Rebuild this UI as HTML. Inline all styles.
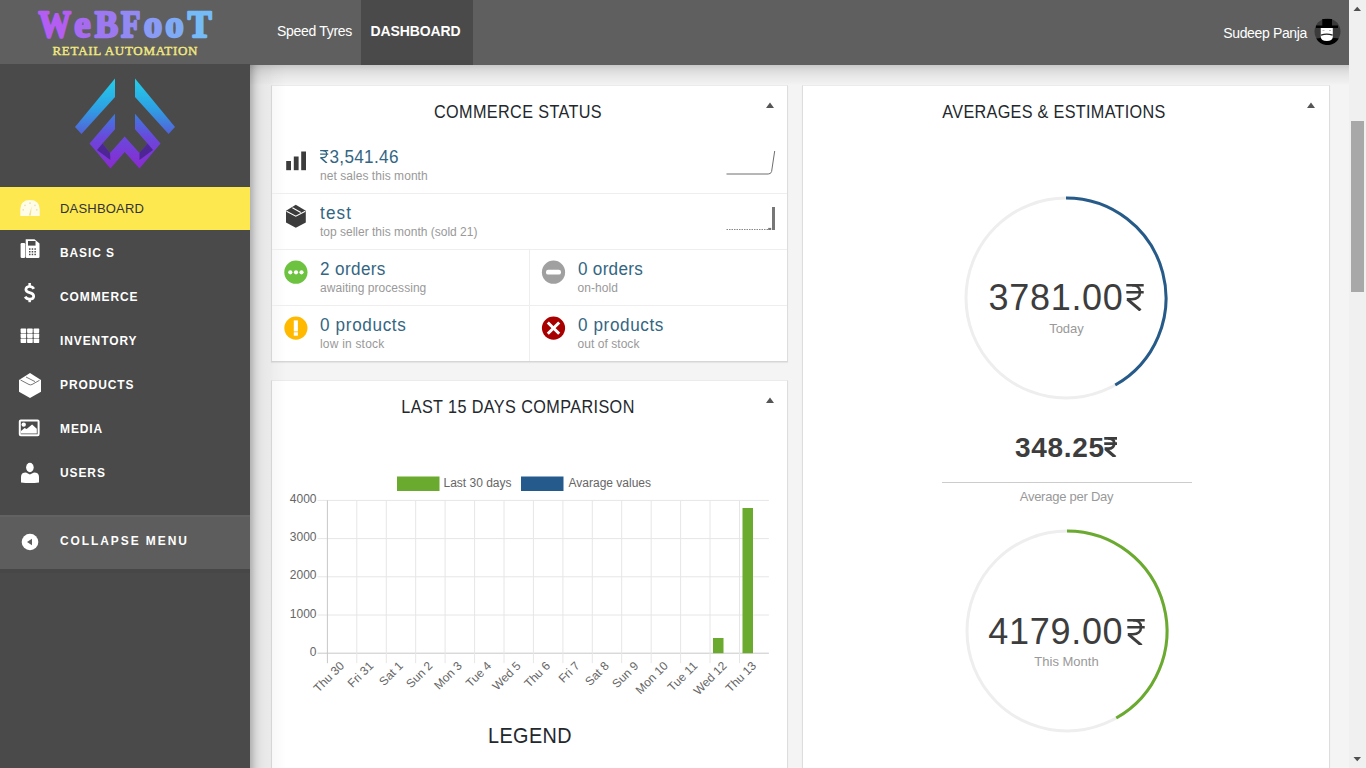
<!DOCTYPE html>
<html><head><meta charset="utf-8"><title>Dashboard</title>
<style>
html,body{margin:0;padding:0;width:1366px;height:768px;overflow:hidden;background:#f3f3f3;}
body{position:relative;font-family:"Liberation Sans", sans-serif;}
.t{position:absolute;line-height:1;white-space:nowrap;}
.abs{position:absolute;}
svg.rs{display:inline-block;vertical-align:baseline;}
</style></head><body>
<div class="abs" style="left:250px;top:64px;width:1099px;height:704px;background:#f4f4f4;"></div>
<div class="abs" style="left:271px;top:85px;width:517px;height:277px;background:#fff;border:1px solid #dddddd;border-top-color:#ebebeb;border-bottom-color:#d6d6d6;box-shadow:0 1px 1px rgba(0,0,0,.06);box-sizing:border-box;"></div>
<div class="abs" style="left:271px;top:380px;width:517px;height:401px;background:#fff;border:1px solid #dddddd;border-top-color:#ebebeb;border-bottom-color:#d6d6d6;box-shadow:0 1px 1px rgba(0,0,0,.06);box-sizing:border-box;"></div>
<div class="abs" style="left:802px;top:85px;width:528px;height:700px;background:#fff;border:1px solid #dddddd;border-top-color:#ebebeb;border-bottom-color:#d6d6d6;box-shadow:0 1px 1px rgba(0,0,0,.06);box-sizing:border-box;"></div>
<div class="abs" style="left:250px;top:65px;width:1099px;height:20px;background:linear-gradient(rgba(0,0,0,.18),rgba(0,0,0,.107) 25%,rgba(0,0,0,.06) 50%,rgba(0,0,0,.033) 75%,rgba(0,0,0,.01) 95%,rgba(0,0,0,0));"></div>
<div class="abs" style="left:250px;top:65px;width:36px;height:703px;background:linear-gradient(90deg,rgba(0,0,0,.26),rgba(0,0,0,.225) 5.5%,rgba(0,0,0,.17) 11%,rgba(0,0,0,.127) 16.6%,rgba(0,0,0,.094) 22%,rgba(0,0,0,.074) 27.7%,rgba(0,0,0,.057) 33%,rgba(0,0,0,.049) 44%,rgba(0,0,0,.04) 55%,rgba(0,0,0,.025) 66%,rgba(0,0,0,.014) 78%,rgba(0,0,0,0));"></div>
<div class="abs" style="left:0;top:0;width:1349px;height:65px;background:#5f5f5f;"></div>
<div class="abs" style="left:361px;top:0;width:112px;height:65px;background:#4a4a4a;"></div>
<div class="t" style="left:277px;top:24.15px;font-size:14px;color:#fff;font-weight:normal;letter-spacing:-0.3px;font-family:'Liberation Sans', sans-serif;">Speed Tyres</div>
<div class="t" style="left:370.5px;top:24.15px;font-size:14px;color:#fff;font-weight:bold;letter-spacing:-0.1px;font-family:'Liberation Sans', sans-serif;">DASHBOARD</div>
<div class="t" style="left:1107.00px;width:200px;text-align:right;top:26.15px;font-size:14px;color:#fff;font-weight:normal;letter-spacing:-0.35px;font-family:'Liberation Sans', sans-serif;">Sudeep Panja</div>
<svg class="abs" style="left:1314px;top:18px;" width="27" height="27" viewBox="0 0 27 27">
<circle cx="13.5" cy="13.5" r="13" fill="#3b3b3b"/>
<path d="M2.2 20.5 A13 13 0 0 0 24.8 20.5 Q20 19.6 13.5 19.8 Q7 19.6 2.2 20.5 Z" fill="#000"/>
<rect x="8.3" y="1" width="9.7" height="7" fill="#000"/>
<rect x="2" y="7.5" width="22" height="2.5" fill="#000"/>
<path d="M6.8 10 H18.8 V19 Q18.5 22.8 12.8 23 Q7.1 22.8 6.8 19 Z" fill="#fff"/>
<path d="M7 17.2 Q12.8 15.2 18.6 17.2" fill="none" stroke="#222" stroke-width="1.3"/>
<rect x="8.5" y="12" width="2" height="1" fill="#bbb"/><rect x="15" y="12" width="2" height="1" fill="#bbb"/>
</svg>
<svg class="abs" style="left:0;top:0;" width="250" height="64" viewBox="0 0 250 64">
<defs><linearGradient id="lg" x1="36" y1="0" x2="212" y2="0" gradientUnits="userSpaceOnUse">
<stop offset="0" stop-color="#b45cf2"/><stop offset="0.45" stop-color="#9a80f2"/><stop offset="1" stop-color="#72bdf8"/></linearGradient></defs>
<g font-family="Liberation Serif" font-weight="bold" font-size="37" stroke-width="2.3" stroke-linejoin="round" text-anchor="middle"><text transform="translate(54.7,36.8) scale(0.88,1)" x="0" y="0" fill="#b35df3" stroke="#b35df3">W</text><text transform="translate(82.4,36.8) scale(1,1)" x="0" y="0" fill="#a66bf1" stroke="#a66bf1">e</text><text transform="translate(106.5,36.8) scale(0.95,1)" x="0" y="0" fill="#9c79f1" stroke="#9c79f1">B</text><text transform="translate(130.8,36.8) scale(0.86,1)" x="0" y="0" fill="#9389f2" stroke="#9389f2">F</text><text transform="translate(153.1,36.8) scale(1,1)" x="0" y="0" fill="#899bf4" stroke="#899bf4">o</text><text transform="translate(174.6,36.8) scale(1,1)" x="0" y="0" fill="#7fabf6" stroke="#7fabf6">o</text><text transform="translate(199.7,36.8) scale(0.97,1)" x="0" y="0" fill="#74bbf8" stroke="#74bbf8">T</text></g>
<text x="125" y="55" text-anchor="middle" font-family="Liberation Serif" font-weight="normal" font-size="13" fill="#f3ea80" stroke="#f3ea80" stroke-width="0.4" textLength="145" lengthAdjust="spacing">RETAIL AUTOMATION</text>
</svg>
<div class="abs" style="left:0;top:64px;width:250px;height:704px;background:#4a4a4a;"></div>
<svg class="abs" style="left:70px;top:72px;" width="110" height="100" viewBox="70 72 110 100">
<defs>
<linearGradient id="g1" x1="0" y1="78" x2="0" y2="134" gradientUnits="userSpaceOnUse"><stop offset="0" stop-color="#22d0ea"/><stop offset="0.55" stop-color="#2ea0e4"/><stop offset="1" stop-color="#5560d8"/></linearGradient>
<linearGradient id="g2" x1="0" y1="113" x2="0" y2="168" gradientUnits="userSpaceOnUse"><stop offset="0" stop-color="#3a7ee0"/><stop offset="0.45" stop-color="#6a48dc"/><stop offset="1" stop-color="#8a2ad0"/></linearGradient>
</defs>
<polygon points="115,78.5 115,97 81.5,134 75,127" fill="url(#g1)"/>
<polygon points="135,78.5 135,97 168.5,134 175,127" fill="url(#g1)"/>
<polygon points="115,113.7 89.5,143.6 110.4,168.4 124.7,152 139.5,168.4 160.5,143.6 135,113.7 135,129.3 147.5,143.6 139.5,153 124.7,136.5 110,153 102.5,143.6 115,129.3" fill="url(#g2)"/>
<polygon points="102.5,143.6 110,153 110.4,160 97,150" fill="#3a1e78" opacity="0.7"/>
<polygon points="147.5,143.6 139.5,153 139.5,160 153,150" fill="#3a1e78" opacity="0.7"/>
</svg>
<div class="abs" style="left:0;top:187px;width:250px;height:43px;background:#fee84f;"></div>
<div class="t" style="left:60px;top:201.80px;font-size:13px;color:#333;font-weight:normal;letter-spacing:0.2px;font-family:'Liberation Sans', sans-serif;">DASHBOARD</div>
<div class="t" style="left:60px;top:245.80px;font-size:13px;color:#fff;font-weight:bold;letter-spacing:1.0px;font-family:'Liberation Sans', sans-serif;transform:scaleX(0.92);transform-origin:0 0;">BASIC S</div>
<div class="t" style="left:60px;top:289.80px;font-size:13px;color:#fff;font-weight:bold;letter-spacing:1.0px;font-family:'Liberation Sans', sans-serif;transform:scaleX(0.92);transform-origin:0 0;">COMMERCE</div>
<div class="t" style="left:60px;top:333.80px;font-size:13px;color:#fff;font-weight:bold;letter-spacing:1.0px;font-family:'Liberation Sans', sans-serif;transform:scaleX(0.92);transform-origin:0 0;">INVENTORY</div>
<div class="t" style="left:60px;top:377.80px;font-size:13px;color:#fff;font-weight:bold;letter-spacing:1.0px;font-family:'Liberation Sans', sans-serif;transform:scaleX(0.92);transform-origin:0 0;">PRODUCTS</div>
<div class="t" style="left:60px;top:421.80px;font-size:13px;color:#fff;font-weight:bold;letter-spacing:1.0px;font-family:'Liberation Sans', sans-serif;transform:scaleX(0.92);transform-origin:0 0;">MEDIA</div>
<div class="t" style="left:60px;top:465.80px;font-size:13px;color:#fff;font-weight:bold;letter-spacing:1.0px;font-family:'Liberation Sans', sans-serif;transform:scaleX(0.92);transform-origin:0 0;">USERS</div>
<svg class="abs" style="left:20px;top:200px;" width="20" height="16" viewBox="0 0 20 16">
<path d="M0.3 16 V9.5 Q0.3 0 10 0 Q19.7 0 19.7 9.5 V16 Z" fill="#fffce8"/>
<circle cx="10" cy="3.2" r="0.9" fill="#e9e2b5"/><circle cx="5" cy="5.3" r="0.9" fill="#e9e2b5"/><circle cx="15" cy="5.3" r="0.9" fill="#e9e2b5"/>
<circle cx="3.2" cy="9.8" r="0.9" fill="#e9e2b5"/><circle cx="16.8" cy="9.8" r="0.9" fill="#e9e2b5"/>
<path d="M11.6 6.5 L8.8 15.5 H10.9 Z" fill="#efe39a"/>
</svg>
<svg class="abs" style="left:20px;top:238px;" width="21" height="21" viewBox="0 0 21 21">
<rect x="0.6" y="5" width="4.6" height="15" rx="1.2" fill="#fff"/>
<path d="M5.7 1.2 H14.5 L19.5 5.5 V18.8 Q19.5 20 18.3 20 H6.9 Q5.7 20 5.7 18.8 Z" fill="#fff"/>
<rect x="8" y="3" width="7.5" height="4.6" fill="#4a4a4a"/>
<g fill="#4a4a4a"><rect x="9" y="10.3" width="1.5" height="1.5"/><rect x="11.7" y="10.3" width="1.5" height="1.5"/><rect x="14.4" y="10.3" width="1.5" height="1.5"/>
<rect x="9" y="13" width="1.5" height="1.5"/><rect x="11.7" y="13" width="1.5" height="1.5"/><rect x="14.4" y="13" width="1.5" height="1.5"/>
<rect x="9" y="15.7" width="1.5" height="1.5"/><rect x="11.7" y="15.7" width="1.5" height="1.5"/><rect x="14.4" y="15.7" width="1.5" height="1.5"/></g>
</svg>
<svg class="abs" style="left:24px;top:283px;" width="12" height="20" viewBox="0 0 12 20">
<rect x="4.4" y="0" width="2.5" height="3.6" fill="#fff"/><rect x="4.4" y="15.6" width="2.5" height="3.6" fill="#fff"/>
<path d="M9.8 5.8C9 4.2 7.6 3.5 5.6 3.5C3.2 3.5 1.9 4.8 1.9 6.5C1.9 8.5 3.7 9.1 5.6 9.6C8 10.2 9.7 11 9.7 13.2C9.7 15 8.1 16.1 5.6 16.1C3.4 16.1 2 15.3 1.2 13.6" fill="none" stroke="#fff" stroke-width="2.7"/>
</svg>
<svg class="abs" style="left:20px;top:328px;" width="21" height="16" viewBox="0 0 21 16"><g fill="#fff"><rect x="0.6" y="0.6" width="5.6" height="4.3" rx="0.6"/><rect x="7.1" y="0.6" width="5.6" height="4.3" rx="0.6"/><rect x="13.6" y="0.6" width="5.6" height="4.3" rx="0.6"/><rect x="0.6" y="5.6" width="5.6" height="4.3" rx="0.6"/><rect x="7.1" y="5.6" width="5.6" height="4.3" rx="0.6"/><rect x="13.6" y="5.6" width="5.6" height="4.3" rx="0.6"/><rect x="0.6" y="10.6" width="5.6" height="4.3" rx="0.6"/><rect x="7.1" y="10.6" width="5.6" height="4.3" rx="0.6"/><rect x="13.6" y="10.6" width="5.6" height="4.3" rx="0.6"/></g></svg>
<svg class="abs" style="left:18px;top:372px;" width="24" height="28" viewBox="18 372 24 28">
<polygon points="30,373 41,380 41,391.8 30,398 19,391.8 19,380" fill="#fff"/>
<path d="M20.5 380 L29 384.5 Q30.5 385.2 32 384.5 L39.5 380.3" fill="none" stroke="#666" stroke-width="0.9"/>
<path d="M26 377 L35 381.6" fill="none" stroke="#666" stroke-width="0.9"/>
</svg>
<svg class="abs" style="left:18px;top:418px;" width="23" height="20" viewBox="18 418 23 20">
<rect x="19.8" y="420.5" width="18.8" height="14.8" rx="1" fill="none" stroke="#fff" stroke-width="2"/>
<circle cx="23.7" cy="424.6" r="2.2" fill="#fff"/>
<path d="M21 433.6 V431 L24.6 428 L26.6 429 L32.1 424.4 L36.8 428.7 V433.6 Z" fill="#fff"/>
</svg>
<svg class="abs" style="left:20px;top:462px;" width="20" height="21" viewBox="20 462 20 21">
<ellipse cx="29.9" cy="467.5" rx="3.8" ry="4.7" fill="#fff"/>
<path d="M21 482.5 V477 Q21 472.6 26 472.6 L29.9 474.5 L34 472.6 Q39 472.6 39 477 V482.5 Q30 483.5 21 482.5 Z" fill="#fff"/>
</svg>
<div class="abs" style="left:0;top:515px;width:250px;height:54px;background:#5d5d5d;border-top:2px solid #626262;box-sizing:border-box;"></div>
<div class="abs" style="left:0;top:569px;width:250px;height:4px;background:#474747;"></div>
<svg class="abs" style="left:21px;top:533px;" width="18" height="18" viewBox="0 0 18 18"><circle cx="9" cy="9" r="8.3" fill="#fff"/><path d="M6 9 L11 5.8 V12.2 Z" fill="#5d5d5d"/></svg>
<div class="t" style="left:60px;top:533.80px;font-size:13px;color:#fff;font-weight:bold;letter-spacing:2.1px;font-family:'Liberation Sans', sans-serif;transform:scaleX(0.92);transform-origin:0 0;">COLLAPSE MENU</div>
<div class="abs" style="left:1349px;top:0;width:17px;height:768px;background:#f0f0f0;"></div>
<div class="abs" style="left:1351px;top:121px;width:13px;height:171px;background:#a8a8a8;"></div>
<svg class="abs" style="left:1349px;top:0;" width="17" height="17"><path d="M4.5 11 L12 11 L8.25 6.8 Z" fill="#505050"/></svg>
<svg class="abs" style="left:1349px;top:751px;" width="17" height="17"><path d="M4.5 6 L12 6 L8.25 10.2 Z" fill="#505050"/></svg>
<div class="t" style="left:217.50px;width:600px;text-align:center;top:102.56px;font-size:18px;color:#23282d;font-weight:normal;letter-spacing:0.42px;font-family:'Liberation Sans', sans-serif;transform:scaleX(0.9);transform-origin:50% 0;">COMMERCE STATUS</div>
<svg class="abs" style="left:765px;top:101px;" width="10" height="8"><path d="M1 7 L9 7 L5 1.5 Z" fill="#555"/></svg>
<div class="abs" style="left:272px;top:193px;width:515px;height:1px;background:#eeeeee;"></div>
<div class="abs" style="left:272px;top:249px;width:515px;height:1px;background:#eeeeee;"></div>
<div class="abs" style="left:272px;top:305px;width:515px;height:1px;background:#eeeeee;"></div>
<div class="abs" style="left:529px;top:249px;width:1px;height:112px;background:#eeeeee;"></div>
<div class="t" style="left:320px;top:148.06px;font-size:18px;color:#336683;letter-spacing:0.35px;transform:scaleX(0.95);transform-origin:0 0;"><svg class="rs" style="width:9.00px;height:13.19px;margin-left:0;margin-right:1px;" viewBox="0 0 18 26.4"><g fill="none" stroke="#336683" stroke-width="2.6"><path d="M0.3 1.3H17.7M0.3 8.3H17.7"/><path d="M6 1.3C11.5 1.3 14 4 14 8C14 12.5 11 15.3 6 15.3H0.8"/><path d="M1.5 15.3L14.5 26.4" stroke-width="2.99"/></g></svg>3,541.46</div>
<div class="t" style="left:320px;top:170.34px;font-size:12px;color:#999999;font-weight:normal;letter-spacing:0.05px;font-family:'Liberation Sans', sans-serif;">net sales this month</div>
<div class="t" style="left:320px;top:204.06px;font-size:18px;color:#336683;font-weight:normal;letter-spacing:1.2px;font-family:'Liberation Sans', sans-serif;transform:scaleX(0.95);transform-origin:0 0;">test</div>
<div class="t" style="left:320px;top:226.34px;font-size:12px;color:#999999;font-weight:normal;letter-spacing:0.0px;font-family:'Liberation Sans', sans-serif;">top seller this month (sold 21)</div>
<div class="t" style="left:320px;top:260.36px;font-size:18px;color:#336683;font-weight:normal;letter-spacing:0.4px;font-family:'Liberation Sans', sans-serif;transform:scaleX(0.95);transform-origin:0 0;">2 orders</div>
<div class="t" style="left:320px;top:282.34px;font-size:12px;color:#999999;font-weight:normal;letter-spacing:0.05px;font-family:'Liberation Sans', sans-serif;">awaiting processing</div>
<div class="t" style="left:577.5px;top:260.36px;font-size:18px;color:#336683;font-weight:normal;letter-spacing:0.3px;font-family:'Liberation Sans', sans-serif;transform:scaleX(0.95);transform-origin:0 0;">0 orders</div>
<div class="t" style="left:577.5px;top:282.34px;font-size:12px;color:#999999;font-weight:normal;letter-spacing:0.05px;font-family:'Liberation Sans', sans-serif;">on-hold</div>
<div class="t" style="left:320px;top:316.36px;font-size:18px;color:#336683;font-weight:normal;letter-spacing:0.7px;font-family:'Liberation Sans', sans-serif;transform:scaleX(0.95);transform-origin:0 0;">0 products</div>
<div class="t" style="left:320px;top:338.34px;font-size:12px;color:#999999;font-weight:normal;letter-spacing:0.2px;font-family:'Liberation Sans', sans-serif;">low in stock</div>
<div class="t" style="left:577.5px;top:316.36px;font-size:18px;color:#336683;font-weight:normal;letter-spacing:0.65px;font-family:'Liberation Sans', sans-serif;transform:scaleX(0.95);transform-origin:0 0;">0 products</div>
<div class="t" style="left:577.5px;top:338.34px;font-size:12px;color:#999999;font-weight:normal;letter-spacing:0.05px;font-family:'Liberation Sans', sans-serif;">out of stock</div>
<svg class="abs" style="left:284px;top:150px;" width="24" height="22" viewBox="284 150 24 22"><g fill="#3c3c3c">
<rect x="286.2" y="161" width="4.8" height="9.2"/><rect x="293.8" y="156.5" width="4.8" height="13.7"/><rect x="301.2" y="151.5" width="4.8" height="18.7"/></g></svg>
<svg class="abs" style="left:284px;top:203px;" width="24" height="26" viewBox="284 203 24 26">
<polygon points="295.8,204.8 305.8,210.8 305.8,222.5 295.8,227.7 286,222.5 286,210.8" fill="#3c3c3c"/>
<path d="M286.5 211.3 L295.8 216.2 L305.3 211.3" fill="none" stroke="#fff" stroke-width="1.1"/>
<path d="M292.4 207.8 L300.8 212.6" fill="none" stroke="#fff" stroke-width="1.1"/>
</svg>
<svg class="abs" style="left:284px;top:260px;" width="24" height="24" viewBox="0 0 24 24"><circle cx="11.9" cy="12.2" r="11.6" fill="#6dc240"/>
<circle cx="6.3" cy="12.3" r="2.1" fill="#fff"/><circle cx="12" cy="12.3" r="2.1" fill="#fff"/><circle cx="17.5" cy="12.3" r="2.1" fill="#fff"/></svg>
<svg class="abs" style="left:541px;top:260px;" width="25" height="24" viewBox="0 0 25 24"><circle cx="12.5" cy="12.2" r="11.6" fill="#a0a0a0"/>
<rect x="5" y="9.8" width="15" height="4.8" rx="2.2" fill="#fff"/></svg>
<svg class="abs" style="left:284px;top:316px;" width="24" height="24" viewBox="0 0 24 24"><circle cx="11.9" cy="12.1" r="11.6" fill="#ffb900"/>
<rect x="9.8" y="4.4" width="4.1" height="11" fill="#fff"/><rect x="9.8" y="16.3" width="4.1" height="3.4" fill="#fff"/></svg>
<svg class="abs" style="left:541px;top:316px;" width="25" height="24" viewBox="0 0 25 24"><circle cx="12.5" cy="12.1" r="11.6" fill="#a80000"/>
<path d="M6.8 6.5 L18.2 17.8 M18.2 6.5 L6.8 17.8" stroke="#fff" stroke-width="3"/></svg>
<svg class="abs" style="left:720px;top:145px;" width="60" height="90" viewBox="720 145 60 90">
<path d="M726.5 174 H768.2 Q771 174 771.6 171.5 L774.7 151" fill="none" stroke="#6e6e6e" stroke-width="1"/>
<path d="M726.5 229.5 H768" fill="none" stroke="#888" stroke-width="1" stroke-dasharray="1.5 1"/>
<rect x="768.2" y="227.9" width="3" height="2.1" fill="#777"/>
<rect x="772" y="207" width="3" height="23" fill="#777"/>
</svg>
<div class="t" style="left:217.50px;width:600px;text-align:center;top:397.76px;font-size:18px;color:#23282d;font-weight:normal;letter-spacing:0.45px;font-family:'Liberation Sans', sans-serif;transform:scaleX(0.9);transform-origin:50% 0;">LAST 15 DAYS COMPARISON</div>
<svg class="abs" style="left:765px;top:396px;" width="10" height="8"><path d="M1 7 L9 7 L5 1.5 Z" fill="#555"/></svg>
<svg class="abs" style="left:272px;top:430px;" width="515" height="290" viewBox="272 430 515 290">
<rect x="397" y="476.5" width="42.5" height="14.5" fill="#6aaa2f" />
<rect x="521" y="476.5" width="42.5" height="14.5" fill="#245a8c" />
<text x="443.5" y="487.3" font-family="Liberation Sans" font-size="12" fill="#666">Last 30 days</text>
<text x="568.5" y="487.3" font-family="Liberation Sans" font-size="12" fill="#666">Avarage values</text>
<line x1="317.5" y1="500.4" x2="768.9" y2="500.4" stroke="#e6e6e6" stroke-width="1"/>
<text x="316.5" y="502.9" text-anchor="end" font-family="Liberation Sans" font-size="12" fill="#666">4000</text>
<line x1="317.5" y1="538.6" x2="768.9" y2="538.6" stroke="#e6e6e6" stroke-width="1"/>
<text x="316.5" y="541.1" text-anchor="end" font-family="Liberation Sans" font-size="12" fill="#666">3000</text>
<line x1="317.5" y1="576.8" x2="768.9" y2="576.8" stroke="#e6e6e6" stroke-width="1"/>
<text x="316.5" y="579.3" text-anchor="end" font-family="Liberation Sans" font-size="12" fill="#666">2000</text>
<line x1="317.5" y1="615.0" x2="768.9" y2="615.0" stroke="#e6e6e6" stroke-width="1"/>
<text x="316.5" y="617.5" text-anchor="end" font-family="Liberation Sans" font-size="12" fill="#666">1000</text>
<line x1="317.5" y1="653.2" x2="768.9" y2="653.2" stroke="#c8c8c8" stroke-width="1"/>
<text x="316.5" y="655.7" text-anchor="end" font-family="Liberation Sans" font-size="12" fill="#666">0</text>
<line x1="327.4" y1="500.4" x2="327.4" y2="663.2" stroke="#c8c8c8" stroke-width="1"/>
<line x1="356.8" y1="500.4" x2="356.8" y2="663.2" stroke="#e6e6e6" stroke-width="1"/>
<line x1="386.3" y1="500.4" x2="386.3" y2="663.2" stroke="#e6e6e6" stroke-width="1"/>
<line x1="415.7" y1="500.4" x2="415.7" y2="663.2" stroke="#e6e6e6" stroke-width="1"/>
<line x1="445.1" y1="500.4" x2="445.1" y2="663.2" stroke="#e6e6e6" stroke-width="1"/>
<line x1="474.6" y1="500.4" x2="474.6" y2="663.2" stroke="#e6e6e6" stroke-width="1"/>
<line x1="504.0" y1="500.4" x2="504.0" y2="663.2" stroke="#e6e6e6" stroke-width="1"/>
<line x1="533.4" y1="500.4" x2="533.4" y2="663.2" stroke="#e6e6e6" stroke-width="1"/>
<line x1="562.9" y1="500.4" x2="562.9" y2="663.2" stroke="#e6e6e6" stroke-width="1"/>
<line x1="592.3" y1="500.4" x2="592.3" y2="663.2" stroke="#e6e6e6" stroke-width="1"/>
<line x1="621.7" y1="500.4" x2="621.7" y2="663.2" stroke="#e6e6e6" stroke-width="1"/>
<line x1="651.2" y1="500.4" x2="651.2" y2="663.2" stroke="#e6e6e6" stroke-width="1"/>
<line x1="680.6" y1="500.4" x2="680.6" y2="663.2" stroke="#e6e6e6" stroke-width="1"/>
<line x1="710.0" y1="500.4" x2="710.0" y2="663.2" stroke="#e6e6e6" stroke-width="1"/>
<line x1="739.5" y1="500.4" x2="739.5" y2="663.2" stroke="#e6e6e6" stroke-width="1"/>
<text transform="translate(344.9,666.6) rotate(-45)" text-anchor="end" font-family="Liberation Sans" font-size="12" fill="#666">Thu 30</text>
<text transform="translate(374.3,666.6) rotate(-45)" text-anchor="end" font-family="Liberation Sans" font-size="12" fill="#666">Fri 31</text>
<text transform="translate(403.8,666.6) rotate(-45)" text-anchor="end" font-family="Liberation Sans" font-size="12" fill="#666">Sat 1</text>
<text transform="translate(433.2,666.6) rotate(-45)" text-anchor="end" font-family="Liberation Sans" font-size="12" fill="#666">Sun 2</text>
<text transform="translate(462.6,666.6) rotate(-45)" text-anchor="end" font-family="Liberation Sans" font-size="12" fill="#666">Mon 3</text>
<text transform="translate(492.1,666.6) rotate(-45)" text-anchor="end" font-family="Liberation Sans" font-size="12" fill="#666">Tue 4</text>
<text transform="translate(521.5,666.6) rotate(-45)" text-anchor="end" font-family="Liberation Sans" font-size="12" fill="#666">Wed 5</text>
<text transform="translate(550.9,666.6) rotate(-45)" text-anchor="end" font-family="Liberation Sans" font-size="12" fill="#666">Thu 6</text>
<text transform="translate(580.4,666.6) rotate(-45)" text-anchor="end" font-family="Liberation Sans" font-size="12" fill="#666">Fri 7</text>
<text transform="translate(609.8,666.6) rotate(-45)" text-anchor="end" font-family="Liberation Sans" font-size="12" fill="#666">Sat 8</text>
<text transform="translate(639.2,666.6) rotate(-45)" text-anchor="end" font-family="Liberation Sans" font-size="12" fill="#666">Sun 9</text>
<text transform="translate(668.7,666.6) rotate(-45)" text-anchor="end" font-family="Liberation Sans" font-size="12" fill="#666">Mon 10</text>
<text transform="translate(698.1,666.6) rotate(-45)" text-anchor="end" font-family="Liberation Sans" font-size="12" fill="#666">Tue 11</text>
<text transform="translate(727.5,666.6) rotate(-45)" text-anchor="end" font-family="Liberation Sans" font-size="12" fill="#666">Wed 12</text>
<text transform="translate(757.0,666.6) rotate(-45)" text-anchor="end" font-family="Liberation Sans" font-size="12" fill="#666">Thu 13</text>
<rect x="713" y="638" width="10.5" height="15.2" fill="#6aaa2f"/>
<rect x="742.5" y="508" width="10.5" height="145.2" fill="#6aaa2f"/>
</svg>
<div class="t" style="left:229.50px;width:600px;text-align:center;top:725.08px;font-size:22px;color:#23282d;font-weight:normal;letter-spacing:0.5px;font-family:'Liberation Sans', sans-serif;transform:scaleX(0.9);transform-origin:50% 0;">LEGEND</div>
<div class="t" style="left:754.00px;width:600px;text-align:center;top:102.56px;font-size:18px;color:#23282d;font-weight:normal;letter-spacing:0.35px;font-family:'Liberation Sans', sans-serif;transform:scaleX(0.9);transform-origin:50% 0;">AVERAGES &amp; ESTIMATIONS</div>
<svg class="abs" style="left:1306px;top:101px;" width="10" height="8"><path d="M1 7 L9 7 L5 1.5 Z" fill="#555"/></svg>
<svg class="abs" style="left:956.4000000000001px;top:187.5px;" width="220" height="220" viewBox="956.4000000000001 187.5 220 220"><circle cx="1066.4" cy="297.5" r="100" fill="none" stroke="#eeeeee" stroke-width="3"/><path d="M1066.4 197.5 A100 100 0 0 1 1115.67 384.52" fill="none" stroke="#265b89" stroke-width="3"/></svg>
<svg class="abs" style="left:956.5px;top:520.5px;" width="220" height="220" viewBox="956.5 520.5 220 220"><circle cx="1066.5" cy="630.5" r="100" fill="none" stroke="#eeeeee" stroke-width="3"/><path d="M1066.5 530.5 A100 100 0 0 1 1115.77 717.52" fill="none" stroke="#6aaa2f" stroke-width="3"/></svg>
<div class="t" style="left:988.5px;top:280.23px;font-size:36px;color:#3d3d3d;letter-spacing:0.7px;">3781.00</div>
<svg class="abs" style="left:1126px;top:284.3px;" width="18" height="26.4" viewBox="0 0 18 26.4"><g fill="none" stroke="#3d3d3d" stroke-width="2.6"><path d="M0.3 1.3H17.7M0.3 8.3H17.7"/><path d="M6 1.3C11.5 1.3 14 4 14 8C14 12.5 11 15.3 6 15.3H0.8"/><path d="M1.5 15.3L14.5 26.4" stroke-width="3"/></g></svg>
<div class="t" style="left:766.50px;width:600px;text-align:center;top:322.30px;font-size:13px;color:#999;font-weight:normal;letter-spacing:0px;font-family:'Liberation Sans', sans-serif;">Today</div>
<div class="t" style="left:1015px;top:433.90px;font-size:28px;color:#3d3d3d;font-weight:bold;letter-spacing:0.7px;">348.25</div>
<svg class="abs" style="left:1103.5px;top:437px;" width="13.4" height="20.2" viewBox="0 0 18 26.4" preserveAspectRatio="none"><g fill="none" stroke="#3d3d3d" stroke-width="3.6"><path d="M0.3 1.8H17.7M0.3 8.6H17.7"/><path d="M5.5 1.8C11.5 1.8 13.8 4.2 13.8 8.2C13.8 12.6 10.8 15.3 5.5 15.3H0.8"/><path d="M2 15.3L15.2 26.4" stroke-width="4.2"/></g></svg>
<div class="abs" style="left:942px;top:482px;width:250px;height:1px;background:#cccccc;"></div>
<div class="t" style="left:766.50px;width:600px;text-align:center;top:490.30px;font-size:13px;color:#999;font-weight:normal;letter-spacing:-0.25px;font-family:'Liberation Sans', sans-serif;">Average per Day</div>
<div class="t" style="left:988.3px;top:614.33px;font-size:36px;color:#3d3d3d;letter-spacing:0.7px;">4179.00</div>
<svg class="abs" style="left:1126.5px;top:618.5px;" width="18" height="26.4" viewBox="0 0 18 26.4"><g fill="none" stroke="#3d3d3d" stroke-width="2.6"><path d="M0.3 1.3H17.7M0.3 8.3H17.7"/><path d="M6 1.3C11.5 1.3 14 4 14 8C14 12.5 11 15.3 6 15.3H0.8"/><path d="M1.5 15.3L14.5 26.4" stroke-width="3"/></g></svg>
<div class="t" style="left:766.50px;width:600px;text-align:center;top:654.80px;font-size:13px;color:#999;font-weight:normal;letter-spacing:0px;font-family:'Liberation Sans', sans-serif;">This Month</div>
</body></html>
